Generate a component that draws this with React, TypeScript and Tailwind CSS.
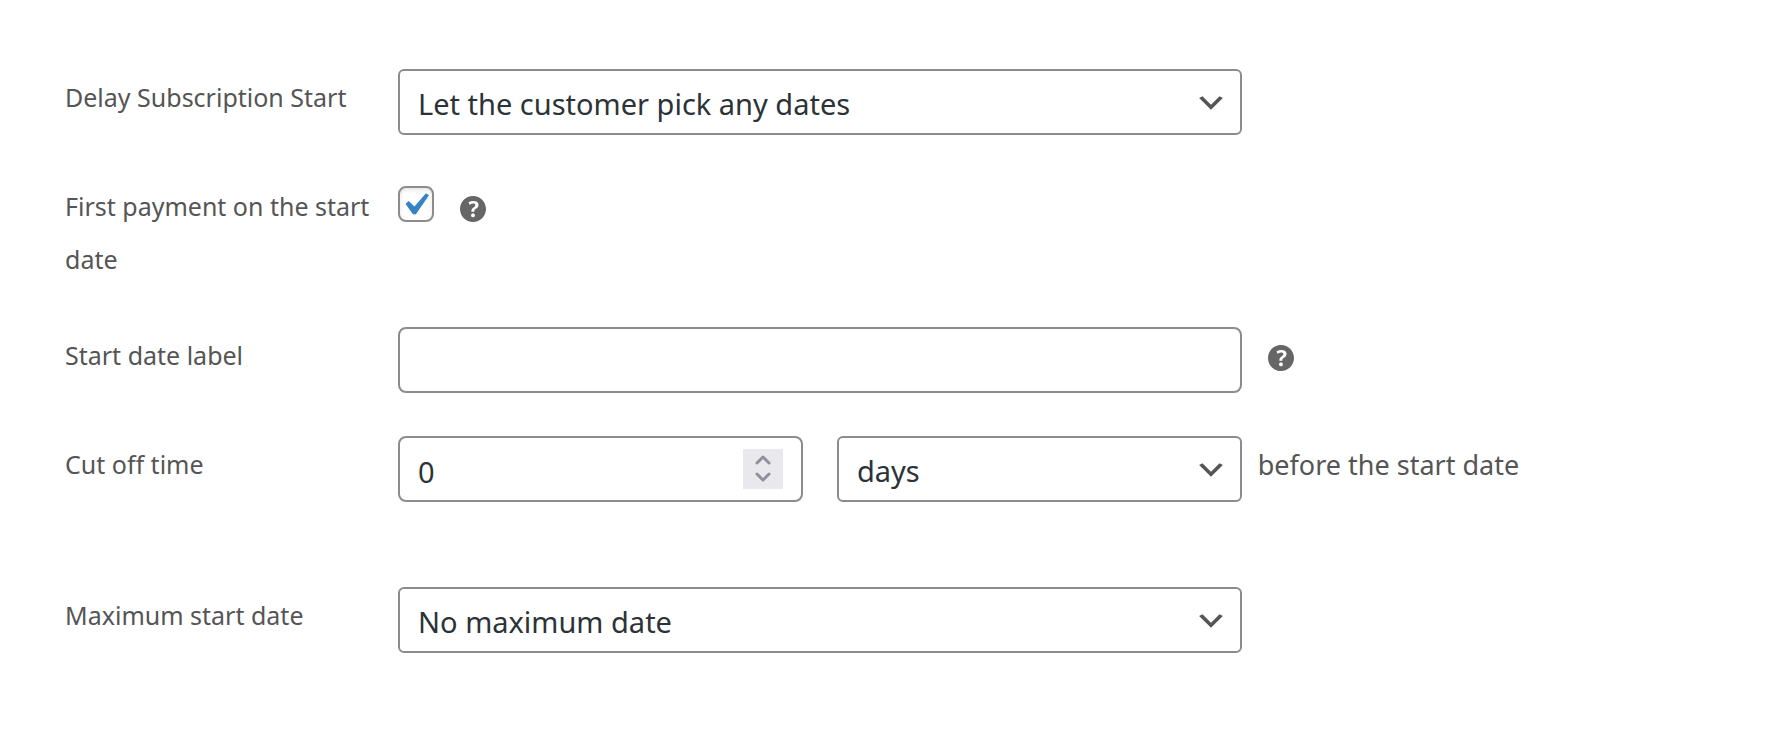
import { useState, type ReactNode, type SelectHTMLAttributes } from "react";

const DELAY_OPTIONS = ["Let the customer pick any dates"];
const UNIT_OPTIONS = ["days", "weeks", "months"];
const MAX_DATE_OPTIONS = ["No maximum date"];

function Row({
  label,
  htmlFor,
  children
}: {
  label: string;
  htmlFor: string;
  children: ReactNode;
}) {
  return (
    <div className="flex items-start">
      <label
        htmlFor={htmlFor}
        className="-mb-0.5 w-[333px] shrink-0 pt-0.5 pr-3 text-[25px] leading-[53px] text-[#555]"
      >
        {label}
      </label>
      <div className="flex min-w-0 flex-1 items-start">{children}</div>
    </div>
  );
}

function Select({
  options,
  className,
  ...props
}: SelectHTMLAttributes<HTMLSelectElement> & {
  options: string[];
  className: string;
}) {
  return (
    <div className={`relative ${className}`}>
      <select
        {...props}
        className="block h-[66px] w-full appearance-none rounded-md border-2 border-[#8c8c8e] bg-white pt-1 pr-14 pl-[18px] text-[29px] text-[#2c3338]"
      >
        {options.map((o) => (
          <option key={o}>{o}</option>
        ))}
      </select>
      <svg
        viewBox="0 0 20 20"
        className="pointer-events-none absolute top-[17px] right-[14px] size-[34px] fill-[#555]"
        aria-hidden="true"
      >
        <path d="M5 6l5 5 5-5 2 1-7 7-7-7 2-1z" />
      </svg>
    </div>
  );
}

function HelpTip() {
  return (
    <button
      type="button"
      aria-label="Help"
      className="mt-[18px] ml-[26px] shrink-0"
    >
      <svg viewBox="3 3 14 14" className="size-[26px] fill-[#666]">
        <path d="M17 10c0-3.87-3.14-7-7-7-3.87 0-7 3.13-7 7s3.13 7 7 7c3.86 0 7-3.13 7-7zm-6.3 1.48H9.14v-.43c0-.38.08-.7.24-.98s.46-.57.88-.89c.41-.29.68-.53.81-.71.14-.18.2-.39.2-.62 0-.25-.09-.44-.28-.58-.19-.13-.45-.19-.79-.19-.58 0-1.25.19-2 .57l-.64-1.28c.87-.49 1.8-.74 2.77-.74.81 0 1.45.2 1.92.58.48.39.71.91.71 1.55 0 .43-.09.8-.29 1.11-.19.32-.57.67-1.11 1.06-.38.28-.61.49-.71.63-.1.15-.15.34-.15.57v.35zm-1.47 2.74c-.18-.17-.27-.42-.27-.73 0-.33.08-.58.26-.75s.43-.25.77-.25c.32 0 .57.09.75.26s.27.42.27.74c0 .3-.09.55-.27.72-.18.18-.43.27-.75.27-.33 0-.58-.09-.76-.26z" />
      </svg>
    </button>
  );
}

function StepIcon({ d }: { d: string }) {
  return (
    <svg
      viewBox="0 0 16 10"
      className="h-[10px] w-4 fill-none stroke-[#8f8f9d] stroke-3"
      strokeLinecap="round"
      strokeLinejoin="round"
      aria-hidden="true"
    >
      <path d={d} />
    </svg>
  );
}

export default function App() {
  const [firstPayment, setFirstPayment] = useState(true);
  const [startLabel, setStartLabel] = useState("");
  const [cutOff, setCutOff] = useState(0);

  return (
    <form className="flex min-h-screen flex-col gap-[43px] bg-white pt-[69px] pr-7 pb-20 pl-[65px] font-['Segoe_UI','Noto_Sans',sans-serif]">
      <Row label="Delay Subscription Start" htmlFor="delay">
        <Select id="delay" options={DELAY_OPTIONS} className="w-5/8" />
      </Row>

      <Row label="First payment on the start date" htmlFor="first-payment">
        <div className="relative mt-2 size-9 shrink-0">
          <input
            id="first-payment"
            type="checkbox"
            checked={firstPayment}
            onChange={(e) => setFirstPayment(e.target.checked)}
            className="block size-9 appearance-none rounded-lg border-2 border-[#8c8c8e] bg-white shadow-[inset_0_2px_4px_rgba(0,0,0,0.1)]"
          />
          {firstPayment && (
            <svg
              viewBox="2.4 1.7 16 16"
              className="pointer-events-none absolute inset-0 size-9 fill-[#3582c4]"
              aria-hidden="true"
            >
              <path d="M14.83 4.89l1.34.94-5.81 8.38H9.02L5.78 9.67l1.34-1.25 2.57 2.4z" />
            </svg>
          )}
        </div>
        <HelpTip />
      </Row>

      <Row label="Start date label" htmlFor="start-label">
        <input
          id="start-label"
          type="text"
          value={startLabel}
          onChange={(e) => setStartLabel(e.target.value)}
          className="h-[66px] w-5/8 rounded-lg border-2 border-[#8c8c8e] bg-white px-[18px] text-[29px] text-[#2c3338]"
        />
        <HelpTip />
      </Row>

      <Row label="Cut off time" htmlFor="cut-off">
        <div className="grid w-5/8 grid-cols-2 gap-[34px]">
          <div className="flex h-[66px] items-center rounded-lg border-2 border-[#8c8c8e] bg-white pr-[18px]">
            <input
              id="cut-off"
              type="number"
              value={cutOff}
              onChange={(e) => setCutOff(Number(e.target.value))}
              className="h-full min-w-0 flex-1 appearance-none bg-transparent pt-1 pl-[18px] text-[29px] text-[#2c3338] outline-none [-moz-appearance:textfield] [&::-webkit-inner-spin-button]:appearance-none"
            />
            <div className="flex size-10 flex-col bg-[#e9e9ed]">
              <button
                type="button"
                aria-label="Increase"
                className="flex flex-1 items-center justify-center pt-0.5"
                onClick={() => setCutOff(cutOff + 1)}
              >
                <StepIcon d="M2 8l6-6 6 6" />
              </button>
              <button
                type="button"
                aria-label="Decrease"
                className="flex flex-1 items-center justify-center pb-1"
                onClick={() => setCutOff(cutOff - 1)}
              >
                <StepIcon d="M2 2l6 6 6-6" />
              </button>
            </div>
          </div>
          <Select
            aria-label="Cut off unit"
            options={UNIT_OPTIONS}
            className="min-w-0"
          />
        </div>
        <span className="ml-4 pt-0.5 text-[27px] leading-[53px] text-[#555]">
          before the start date
        </span>
      </Row>

      <div className="pt-[42px]">
        <Row label="Maximum start date" htmlFor="max-date">
          <Select id="max-date" options={MAX_DATE_OPTIONS} className="w-5/8" />
        </Row>
      </div>
    </form>
  );
}
